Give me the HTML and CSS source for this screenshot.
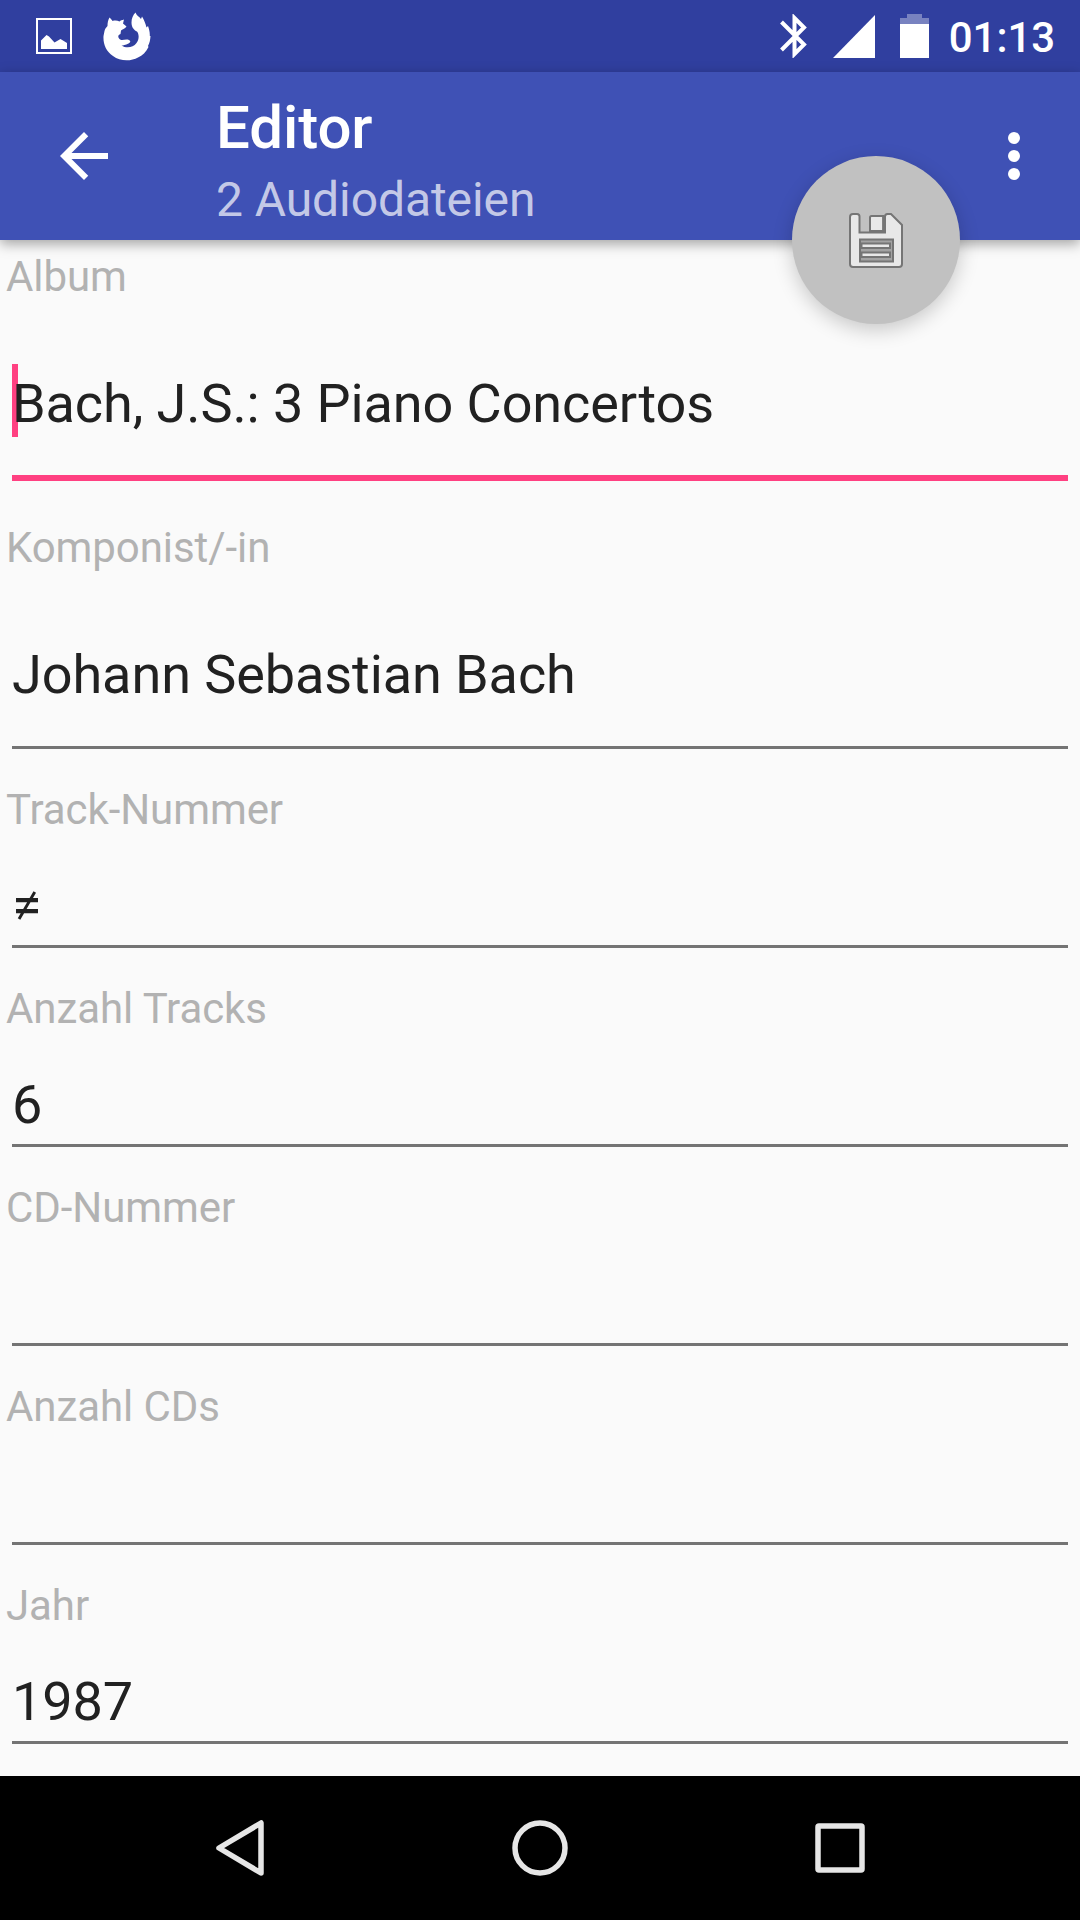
FILE: index.html
```html
<!DOCTYPE html>
<html lang="de">
<head>
    <meta charset="UTF-8">
    <meta name="viewport" content="width=device-width, initial-scale=1.0">
    <title>Editor</title>
    <link rel="stylesheet" href="styles.css">
</head>
<body>
    <div class="status-bar">
        <div class="notifications">
            <svg class="icon-picture" width="36" height="36" viewBox="0 0 36 36">
                <rect x="1" y="1" width="34" height="34" fill="none" stroke="#fff" stroke-width="2"/>
                <path d="M5 22.5L10.5 17l2.5 1.5 5.5 6 6-3.5 6.5 4V31H5z" fill="#fff"/>
            </svg>
            <svg width="48" height="49" viewBox="0 0 48 49">
                <path d="M6.5 5.5C8 7 9 8 9.500 9C12 8.300 14.500 8.500 16.500 9.500C17.500 8.500 19 8 21 7.500L20 11.500L23.500 14.500C22 17 19 17.500 18 18.500L17.500 22C15 23 14.500 25 16.500 27C19 29.500 22 26.500 26 28C28 29 27.500 30.500 25.500 31.500C22.500 33 20 33.500 18.500 33.500C23 36.500 30 36 33.500 31C36.500 27 36 22 34 19.500C31 18 28.500 15.500 28.500 10.500C28.500 6.500 30 3 32.500.5C33.500 3.500 36 4.500 38 7L39 4.500C41 8 42.500 11 43.500 15.500L45 14C46 17 47 20 46.800 24L47.500 24C47.300 28 46.500 31 45 34L45.500 35C43 40 39.500 43.500 35 45.500C28 49.500 17 49.500 10 44C3 39 0 32 .5 24L1.500 19C2 17 3 15.500 4.500 14C4.500 11 5 8 6.500 5.500z" fill="#fff"/>
            </svg>
        </div>
        <div class="system">
            <svg width="27" height="44" viewBox="0 0 27 44">
                <path d="M1.500 8L24 30.500 14.500 40V4L24 13.500 1.500 36" fill="none" stroke="#fff" stroke-width="4"/>
            </svg>
            <svg class="icon-signal" width="43" height="43" viewBox="0 0 43 43">
                <path d="M42 0v43H0z" fill="#fff"/>
            </svg>
            <svg class="icon-battery" width="29" height="44" viewBox="0 0 29 44">
                <path d="M7 0h15v4h7v6H0V4h7z" fill="#fff" opacity=".35"/>
                <path d="M0 10h29v34H0z" fill="#fff"/>
            </svg>
            <span class="clock">01:13</span>
        </div>
    </div>

    <header class="app-bar">
        <svg width="72" height="72" viewBox="0 0 24 24">
            <path d="M20 11H7.830l5.590-5.590L12 4l-8 8 8 8 1.410-1.410L7.830 13H20v-2z" fill="#fff"/>
        </svg>
        <div class="titles">
            <h1>Editor</h1>
            <p>2 Audiodateien</p>
        </div>
        <svg class="overflow" width="72" height="72" viewBox="0 0 72 72" fill="#fff">
            <circle cx="36" cy="18" r="6"/>
            <circle cx="36" cy="36" r="6"/>
            <circle cx="36" cy="54" r="6"/>
        </svg>
        <button class="fab" aria-label="Speichern">
            <svg width="54" height="55" viewBox="0 0 54 55" fill="#e8e8e8" stroke="#757575" stroke-width="2">
                <path d="M4 1h4q2.500 0 2.500 2.500V19.500H36V3.500Q36 1 38.500 1h3.500L53 12V51q0 3-3 3H4q-3 0-3-3V4q0-3 3-3z"/>
                <path d="M21 18V4.500q0-1.500 1.500-1.500H34.500v15z"/>
                <path d="M34.700 4v15" stroke-width="3"/>
                <path d="M11 26.500h33v22h-33z" fill="#a3a3a3"/>
                <path d="M12.500 30.500h28.500v4.500h-28.500zM12.500 39.500h28.500v4.500h-28.500z"/>
            </svg>
        </button>
    </header>

    <main class="form">
        <div class="field tall focused">
            <div class="label">Album</div>
            <div class="value">Bach, J.S.: 3 Piano Concertos</div>
        </div>
        <div class="field tall last-tall">
            <div class="label">Komponist/-in</div>
            <div class="value">Johann Sebastian Bach</div>
        </div>
        <div class="field">
            <div class="label">Track-Nummer</div>
            <div class="value">≠</div>
        </div>
        <div class="field">
            <div class="label">Anzahl Tracks</div>
            <div class="value">6</div>
        </div>
        <div class="field">
            <div class="label">CD-Nummer</div>
            <div class="value"></div>
        </div>
        <div class="field">
            <div class="label">Anzahl CDs</div>
            <div class="value"></div>
        </div>
        <div class="field">
            <div class="label">Jahr</div>
            <div class="value">1987</div>
        </div>
    </main>

    <nav class="nav-bar">
        <svg width="60" height="60" viewBox="0 0 60 60">
            <path d="M51 5V55L9 30z"/>
        </svg>
        <svg width="60" height="60" viewBox="0 0 60 60">
            <circle cx="30" cy="30" r="25"/>
        </svg>
        <svg width="60" height="60" viewBox="0 0 60 60">
            <rect x="8" y="8" width="44" height="44" rx="1"/>
        </svg>
    </nav>
</body>
</html>
```

FILE: styles.css
```css
:root {
    --primary: #3f51b5;
    --primary-dark: #303f9f;
    --accent: #ff4081;
    --background: #fafafa;
}

* {
    box-sizing: border-box;
}

body {
    margin: 0;
    height: 1920px;
    display: flex;
    flex-direction: column;
    overflow: hidden;
    background: var(--background);
    font-family: Roboto, sans-serif;
    letter-spacing: -0.08px;
}

svg {
    display: block;
    flex-shrink: 0;
}

.status-bar {
    flex-shrink: 0;
    height: 72px;
    padding: 0 25px 0 36px;
    display: flex;
    justify-content: space-between;
    background: var(--primary-dark);
}

.notifications, .system {
    display: flex;
    align-items: center;
}

.notifications {
    gap: 31px;
}

.icon-signal {
    margin-left: 26px;
}

.icon-battery {
    margin-left: 24px;
}

.clock {
    margin-left: 20px;
    padding-top: 3px;
    color: #fff;
    font-size: 42px;
    font-weight: 500;
    line-height: 72px;
}

.app-bar {
    position: relative;
    flex-shrink: 0;
    height: 168px;
    padding: 0 30px 0 48px;
    display: flex;
    align-items: center;
    background: var(--primary);
    box-shadow: 0 4px 12px rgba(0, 0, 0, 0.35);
}

.titles {
    flex: 1;
    margin-left: 96px;
    padding-top: 12px;
}

.titles h1 {
    margin: 0;
    color: #fff;
    font-size: 60px;
    font-weight: 500;
    line-height: 76px;
}

.titles p {
    margin: 0;
    color: rgba(255, 255, 255, 0.7);
    font-size: 48px;
    line-height: 68px;
}

/* floats half over the bar's lower edge */
.fab {
    position: absolute;
    right: 120px;
    bottom: -84px;
    width: 168px;
    height: 168px;
    padding: 0;
    display: flex;
    align-items: center;
    justify-content: center;
    background: #c1c1c1;
    border: none;
    border-radius: 50%;
    box-shadow: 0 6px 20px rgba(0, 0, 0, 0.2);
}

.form {
    flex: 1;
    min-height: 0;
    overflow: hidden;
    padding: 12px 12px 0;
}

.field {
    height: 199px;
}

.field.tall {
    height: 271px;
}

.field.last-tall {
    height: 262px;
}

.label {
    margin-left: -6px;
    color: #b2b2b2;
    font-size: 42px;
    line-height: 50px;
}

.value {
    position: relative;
    height: 113px;
    padding-top: 39px;
    border-bottom: 3px solid #747474;
    color: #212121;
    font-size: 54px;
    line-height: 64px;
}

.tall .value {
    height: 176px;
    padding-top: 70px;
}

.focused .value {
    height: 179px;
    border-bottom: 6px solid var(--accent);
}

/* text cursor, drawn under the first letter */
.focused .value::before {
    content: "";
    position: absolute;
    left: 0;
    top: 62px;
    z-index: -1;
    width: 6px;
    height: 73px;
    background: var(--accent);
}

.nav-bar {
    flex-shrink: 0;
    height: 144px;
    padding: 0 210px;
    display: flex;
    align-items: center;
    justify-content: space-between;
    background: #000;
}

.nav-bar svg {
    fill: none;
    stroke: #e6e6e6;
    stroke-width: 5.5;
    stroke-linejoin: round;
}
```
